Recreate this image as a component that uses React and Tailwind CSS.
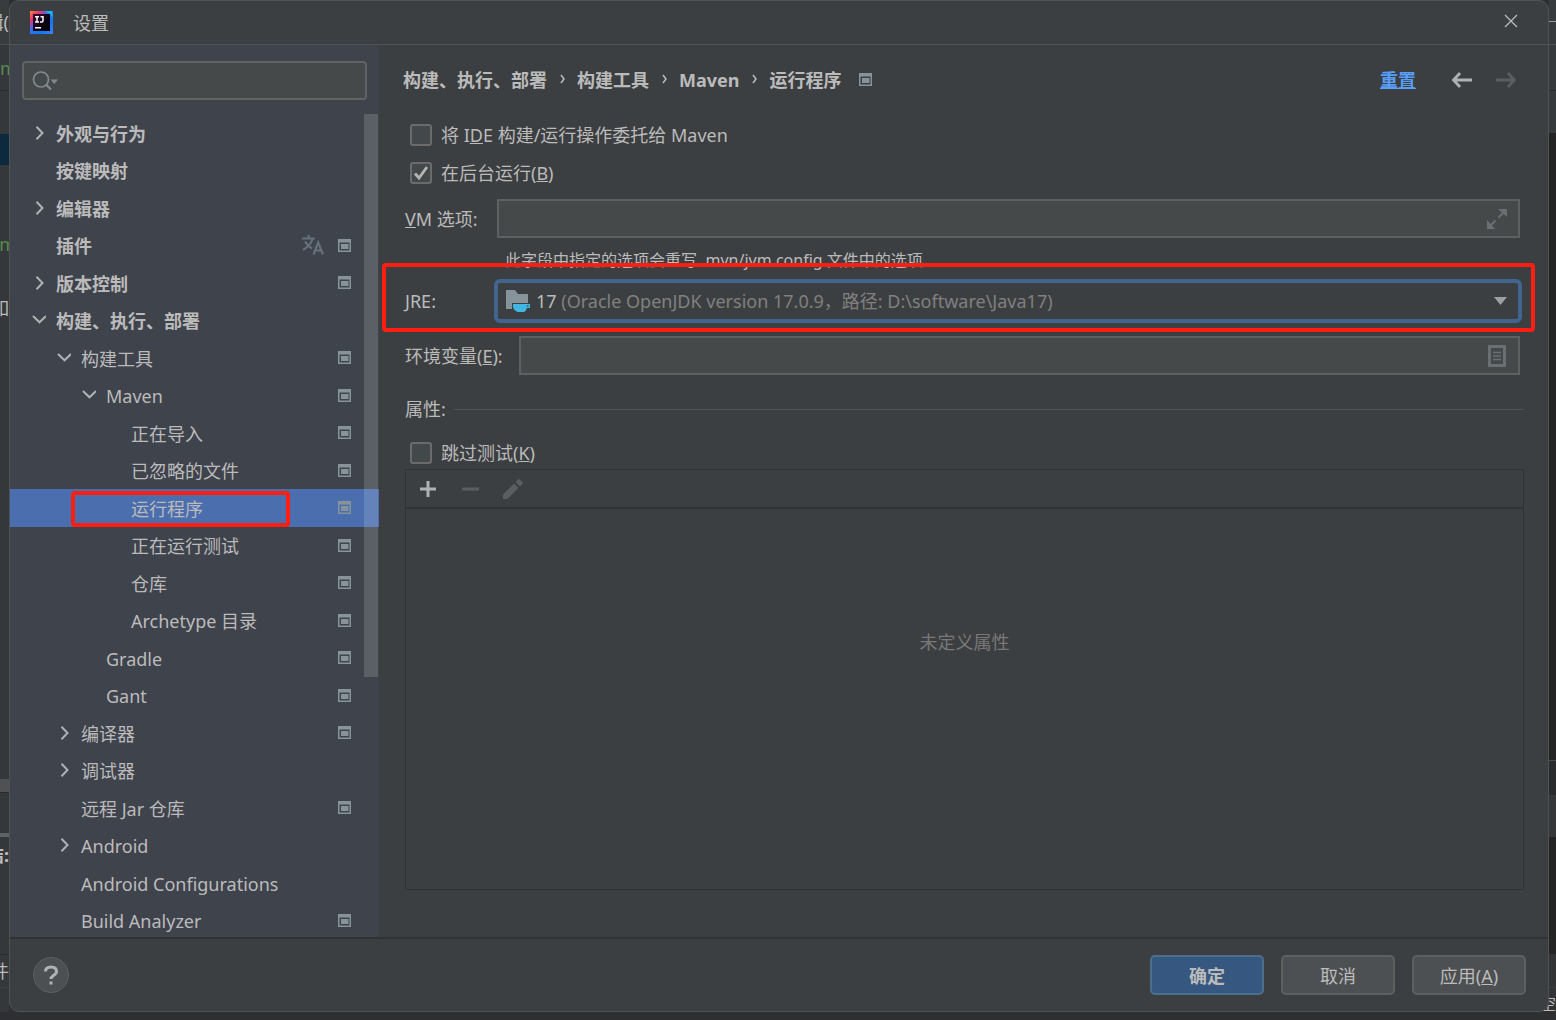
import clsx from 'clsx';

const FONT = 'font-["Noto_Sans","Noto_Sans_CJK_SC",sans-serif]';

const TREE = [
  { label: '外观与行为', level: 0, arrow: 'right' },
  { label: '按键映射', level: 0 },
  { label: '编辑器', level: 0, arrow: 'right' },
  { label: '插件', level: 0, project: true, translate: true },
  { label: '版本控制', level: 0, arrow: 'right', project: true },
  { label: '构建、执行、部署', level: 0, arrow: 'down' },
  { label: '构建工具', level: 1, arrow: 'down', project: true },
  { label: 'Maven', level: 2, arrow: 'down', project: true },
  { label: '正在导入', level: 3, project: true },
  { label: '已忽略的文件', level: 3, project: true },
  { label: '运行程序', level: 3, project: true, selected: true },
  { label: '正在运行测试', level: 3, project: true },
  { label: '仓库', level: 3, project: true },
  { label: 'Archetype 目录', level: 3, project: true },
  { label: 'Gradle', level: 2, project: true },
  { label: 'Gant', level: 2, project: true },
  { label: '编译器', level: 1, arrow: 'right', project: true },
  { label: '调试器', level: 1, arrow: 'right' },
  { label: '远程 Jar 仓库', level: 1, project: true },
  { label: 'Android', level: 1, arrow: 'right' },
  { label: 'Android Configurations', level: 1 },
  { label: 'Build Analyzer', level: 1, project: true },
];

const INDENT = ['pl-[20px]', 'pl-[45px]', 'pl-[70px]', 'pl-[95px]'];

function IdeaLogo() {
  return (
    <svg width="23" height="23" viewBox="0 0 23 23" aria-hidden="true">
      <defs>
        <linearGradient id="idea" x1="0" y1="0" x2="1" y2="1">
          <stop offset="0" stopColor="#fc8a3c" />
          <stop offset="0.22" stopColor="#f0306f" />
          <stop offset="0.42" stopColor="#3f6cf0" />
          <stop offset="0.7" stopColor="#087cfa" />
          <stop offset="1" stopColor="#4a7df5" />
        </linearGradient>
        <linearGradient id="ideaInner" x1="0" y1="0" x2="1" y2="1">
          <stop offset="0" stopColor="#3b0a34" />
          <stop offset="0.6" stopColor="#0a0410" />
          <stop offset="1" stopColor="#000" />
        </linearGradient>
      </defs>
      <path fill="url(#idea)" d="M0 0h23v23H0z" />
      <path fill="#19b4f5" d="M15 0h7l1 7-3-4z" />
      <path fill="url(#ideaInner)" d="M3 3h17v17H3z" />
      <path
        fill="none"
        stroke="#fff"
        strokeWidth="1.5"
        d="M5 5.7h4M7 5.5v5.5M5 11h4M10.5 5.7H13v4q0 1.3-1.3 1.3H10"
      />
      <path fill="#fff" d="M5 16h6v1.6H5z" />
    </svg>
  );
}

function Chevron({ dir }) {
  return (
    <svg width="14" height="14" viewBox="0 0 14 14" aria-hidden="true">
      <path
        fill="none"
        stroke="#afb1b3"
        strokeWidth="2"
        d={dir === 'down' ? 'M1 3 7.500 9.300 14 3' : 'M4.500 .8 10.500 7l-6 6.200'}
      />
    </svg>
  );
}

function ProjectIcon() {
  return (
    <svg width="13" height="13" viewBox="0 0 13 13" className="shrink-0" aria-hidden="true">
      <path fill="#87939a" fillRule="evenodd" d="M0 0h13v13H0zM1.500 3.500v8h10v-8z" />
      <path fill="#87939a" d="M3 5h7.500v5H3z" />
    </svg>
  );
}

function TreeRow({ item }) {
  return (
    <li
      className={clsx(
        'relative flex items-center pr-[28px]',
        INDENT[item.level],
        item.selected && 'bg-[#4b6eaf]',
      )}
    >
      <span className="flex w-[26px] shrink-0 pl-[2px]">
        {item.arrow && <Chevron dir={item.arrow} />}
      </span>
      <span className={clsx('flex-1 pt-[2px] whitespace-nowrap', item.level === 0 && 'font-bold')}>
        {item.label}
      </span>
      {item.translate && (
        <svg width="22" height="20" viewBox="0 0 22 20" className="mr-[14px]" aria-hidden="true">
          <path
            fill="none"
            stroke="#65707a"
            strokeWidth="2.200"
            d="M0 3.500h13M6.500 0v3.500M10.500 4Q8.500 10.500 1 15M3 6.500q2.500 4.500 7 7M11.500 19.500 16.200 7.500 21 19.500M13 15.500h6.500"
          />
        </svg>
      )}
      {item.project && <ProjectIcon />}
      {item.selected && (
        <span className="absolute top-[2px] left-[61px] h-[36px] w-[219px] rounded-[4px] border-4 border-[#ff1e12]" />
      )}
    </li>
  );
}

function Sidebar() {
  return (
    <aside className="flex w-[369px] shrink-0 flex-col bg-[#3f434c]">
      <label className="mx-3 mt-4 flex h-[39px] shrink-0 items-center rounded-[4px] border-2 border-[#616365] bg-[#45494a] pl-2">
        <svg width="28" height="22" viewBox="0 0 28 22" aria-hidden="true">
          <circle cx="9" cy="9.500" r="7.500" fill="none" stroke="#7f8b91" strokeWidth="1.700" />
          <path stroke="#7f8b91" strokeWidth="2.200" d="m14 14.500 5 5" />
          <path fill="#7f8b91" d="M18.500 9.500h7.500l-3.800 4.500z" />
        </svg>
        <input aria-label="搜索" className="min-w-0 flex-1 bg-transparent outline-none" />
      </label>
      <div className="relative mt-[14px] min-h-0 flex-1 overflow-hidden">
        <ul className="grid h-[825px] auto-rows-fr">
          {TREE.map((item) => (
            <TreeRow key={item.label} item={item} />
          ))}
        </ul>
        <div className="absolute top-0 right-[1px] h-[563px] w-[14px] bg-white/15" />
      </div>
    </aside>
  );
}

function Check({ id, checked, children }) {
  return (
    <div className="flex h-[38px] shrink-0 items-center gap-[9px] pl-[5px]">
      <span className="relative flex">
        <input
          id={id}
          type="checkbox"
          defaultChecked={checked}
          className="peer size-[22px] appearance-none rounded-[3px] border-2 border-[#6b6b6b] bg-[#43494a]"
        />
        <svg
          viewBox="0 0 22 22"
          className="pointer-events-none absolute inset-0 hidden size-[22px] peer-checked:block"
          aria-hidden="true"
        >
          <path fill="none" stroke="#b5b5b5" strokeWidth="2.800" d="m5 11.500 4 4.500 8-11" />
        </svg>
      </span>
      <label htmlFor={id}>{children}</label>
    </div>
  );
}

function Crumbs() {
  return (
    <nav className="flex items-center font-bold">
      {['构建、执行、部署', '构建工具', 'Maven', '运行程序'].map((name, i) => (
        <span key={name} className="flex items-center">
          {i > 0 && (
            <svg width="30" height="12" viewBox="0 0 30 12" aria-hidden="true">
              <path fill="none" stroke="#bbb" strokeWidth="1.500" d="m14 1 3 4-3 4" />
            </svg>
          )}
          {name}
        </span>
      ))}
      <span className="ml-[18px]">
        <ProjectIcon />
      </span>
    </nav>
  );
}

function Content() {
  return (
    <main className="flex min-w-0 flex-1 flex-col pr-6 pl-[26px]">
      <div className="mb-[2px] -ml-[2px] flex h-[69px] shrink-0 items-center">
        <Crumbs />
        <a href="#" className="ml-auto font-bold text-[#589df6] underline">
          重置
        </a>
        <button aria-label="后退" className="ml-[35px]">
          <svg width="22" height="18" viewBox="0 0 22 18" aria-hidden="true">
            <path fill="none" stroke="#afb1b3" strokeWidth="2.800" d="M21 9H3M9 2 2.500 9 9 16" />
          </svg>
        </button>
        <button aria-label="前进" disabled className="mr-[7px] ml-[22px]">
          <svg width="22" height="18" viewBox="0 0 22 18" aria-hidden="true">
            <path fill="none" stroke="#5b5d5f" strokeWidth="2.800" d="M1 9h18M13 2l6.500 7-6.500 7" />
          </svg>
        </button>
      </div>

      <Check id="delegate">
        将 I<u>D</u>E 构建/运行操作委托给 Maven
      </Check>
      <Check id="background" checked>
        在后台运行(<u>B</u>)
      </Check>

      <div className="mt-[7px] flex items-center pr-1">
        <label htmlFor="vm" className="w-[92px] shrink-0">
          <u>V</u>M 选项:
        </label>
        <div className="flex h-[39px] flex-1 items-center border-2 border-[#5e6162] bg-[#45494a] pr-[11px]">
          <input id="vm" className="min-w-0 flex-1 bg-transparent outline-none" />
          <svg width="20" height="20" viewBox="0 0 20 20" aria-hidden="true">
            <path fill="#687073" d="M11 0h9v8zM0 11v9h8z" />
            <path stroke="#687073" strokeWidth="2" d="m11.500 8.500 5-5M8.500 11.500l-5 5" />
          </svg>
        </div>
      </div>
      <p className="ml-[100px] h-[25px] pt-[10px] text-[16px] leading-6 whitespace-nowrap">
        此字段中指定的选项会重写 .mvn/jvm.config 文件中的选项
      </p>

      <div className="relative -mr-[11px] -ml-[23px] flex h-[69px] shrink-0 items-center rounded-[4px] border-4 border-[#ff1e12] pt-[7px] pr-[9px] pl-[19px]">
        <label htmlFor="jre" className="w-[89px] shrink-0">
          <u>J</u>RE:
        </label>
        <div className="relative flex h-[44px] flex-1 items-center rounded-[6px] border-4 border-[#41658f] bg-[#3c3f41] pl-2">
          <svg width="26" height="24" viewBox="0 0 26 24" aria-hidden="true">
            <path fill="#87939a" d="M0 1h9l3 4h10v9H6v6H0z" />
            <path
              fill="#40b6e0"
              fillRule="evenodd"
              d="M7 15h17v4h-3q-1 3-3 4h-6Q8 22 7 18zM21 16.500v1.300h1.600v-1.300z"
            />
          </svg>
          <span className="pl-[4px] whitespace-pre">
            17 <span className="text-[#808080]">(Oracle OpenJDK version 17.0.9，路径: D:\software\Java17)</span>
          </span>
          <svg width="13" height="8" viewBox="0 0 13 8" className="mr-[11px] ml-auto" aria-hidden="true">
            <path fill="#9da0a2" d="M0 0h13L6.500 8z" />
          </svg>
          <select id="jre" className="absolute inset-0 opacity-0">
            <option>17</option>
          </select>
        </div>
      </div>

      <div className="mt-[4px] flex items-center pr-1">
        <label htmlFor="env" className="w-[114px] shrink-0">
          环境变量(<u>E</u>):
        </label>
        <div className="flex h-[39px] flex-1 items-center border-2 border-[#5e6162] bg-[#45494a] pr-[12px]">
          <input id="env" className="min-w-0 flex-1 bg-transparent outline-none" />
          <svg width="18" height="22" viewBox="0 0 18 22" aria-hidden="true">
            <path fill="none" stroke="#687073" strokeWidth="3" d="M1.500 1.500h15v19h-15z" />
            <path stroke="#687073" strokeWidth="1.500" d="M5 7.500h8M5 11h8M5 14.500h8" />
          </svg>
        </div>
      </div>

      <div className="mt-[19px] flex h-[30px] items-center gap-2">
        <span>属性:</span>
        <span className="h-px flex-1 bg-[#515456]" />
      </div>
      <div className="mt-[10px]">
        <Check id="skip">
          跳过测试(<u>K</u>)
        </Check>
      </div>

      <div className="-mt-[3px] mb-[47px] flex min-h-0 flex-1 flex-col border border-[#323232]">
        <div className="flex h-[39px] items-center gap-[22px] border-b-2 border-[#323232] pl-[12px]">
          <button aria-label="添加">
            <svg width="20" height="20" viewBox="0 0 20 20" aria-hidden="true">
              <path stroke="#afb1b3" strokeWidth="3" d="M2 10h16M10 2v16" />
            </svg>
          </button>
          <button aria-label="移除" disabled>
            <svg width="20" height="20" viewBox="0 0 20 20" aria-hidden="true">
              <path stroke="#5b5d5f" strokeWidth="3" d="M2 10h17" />
            </svg>
          </button>
          <button aria-label="编辑" disabled>
            <svg width="22" height="22" viewBox="0 0 22 22" aria-hidden="true">
              <path fill="#5b5d5f" d="M1 16.500 12 5.500l4.500 4.500-11 11H1zM13.500 4 17 .8l4.300 4.300L18 8.500z" />
            </svg>
          </button>
        </div>
        <p className="flex h-[265px] items-center justify-center text-[#787878]">未定义属性</p>
      </div>
    </main>
  );
}

function Footer() {
  return (
    <footer className="flex h-[74px] shrink-0 items-center gap-[17px] border-t-2 border-[#323232] pr-[22px] pl-[23px]">
      <button
        aria-label="帮助"
        className="mr-auto flex size-9 items-center justify-center rounded-full border border-[#5e6060] bg-[#4c5052]"
      >
        <svg width="16" height="20" viewBox="0 0 16 20" aria-hidden="true">
          <path fill="none" stroke="#afb1b3" strokeWidth="3" d="M2.500 6.500Q2.500 2 8 2t5.500 4.500Q13.500 8.500 10.500 10.500 8 12.200 8 14" />
          <path fill="#afb1b3" d="M6.500 16.500h3v3h-3z" />
        </svg>
      </button>
      <button className="h-10 w-[114px] rounded-[5px] border-2 border-[#4c708c] bg-[#365880] pt-[2px] font-bold">确定</button>
      <button className="h-10 w-[114px] rounded-[5px] border-2 border-[#5e6060] bg-[#4c5052] pt-[2px]">取消</button>
      <button className="h-10 w-[114px] rounded-[5px] border-2 border-[#5e6060] bg-[#4c5052] pt-[2px]">
        应用(<u>A</u>)
      </button>
    </footer>
  );
}

// Slivers of the editor window that stay visible around the dialog
function EditorLeft() {
  return (
    <div className="flex w-[9px] shrink-0 flex-col overflow-hidden bg-[#35383a] whitespace-nowrap *:shrink-0">
      <div className="flex h-[45px] items-center justify-end border-b border-[#4a4c4e] bg-[#393c3e]">辑(</div>
      <div className="flex h-[46px] items-center border-b border-[#2b2b2b] text-[#5b8a4e]">m</div>
      <div className="mt-[43px] h-[31px] bg-[#0d293e]" />
      <div className="mt-[65px] flex h-[30px] justify-center text-[#5b8a4e]">tm</div>
      <div className="mt-[34px] flex h-[30px] justify-end">如</div>
      <div className="mt-[455px] h-[14px] border-b border-[#2b2b2b] bg-[#4f5152]" />
      <div className="mt-[40px] h-[4px] bg-[#5e6366]" />
      <div className="mt-[4px] flex h-[28px] justify-end font-bold">结:</div>
      <div className="mt-[85px] flex h-[34px] items-center justify-end border-t border-b border-t-[#2b2b2b] border-b-[#404345]">
        件
      </div>
    </div>
  );
}

function EditorRight() {
  return (
    <div className="flex w-[7px] shrink-0 flex-col bg-[#242424] *:shrink-0">
      <div className="h-[45px] border-b border-[#515456] bg-[#383b3d] pt-[21px]">
        <div className="h-px bg-[#9a9a9a]" />
      </div>
      <div className="h-[46px] border-b border-[#2b2b2b] bg-[#373a3c]" />
      <div className="h-[42px] bg-[#373a3c]" />
      <div className="mt-auto h-[35px] border-t border-[#4a4c4d] bg-[#2a2b2c]" />
      <div className="h-[42px] bg-[#353739]" />
      <div className="mt-[117px] h-[34px] border-b border-[#3c3e3f] bg-[#313335]" />
      <div className="flex h-[24px] items-end justify-end bg-[#313335] text-[16px] leading-4 whitespace-nowrap">
        空
      </div>
    </div>
  );
}

export default function App() {
  return (
    <div className={clsx(FONT, 'flex h-screen flex-col overflow-hidden bg-[#2d2f30] text-[18px] leading-7 text-[#bbbbbb]')}>
      <div className="flex min-h-0 flex-1">
        <EditorLeft />
        <div className="relative z-10 flex min-w-0 flex-1 flex-col overflow-hidden rounded-[10px] border border-[#505355] bg-[#3c3f41]">
          <header className="flex h-[44px] shrink-0 items-center border-b border-[#505355] pr-[30px] pl-[20px]">
            <IdeaLogo />
            <h1 className="ml-[20px]">设置</h1>
            <button aria-label="关闭" className="mb-[3px] ml-auto">
              <svg width="14" height="14" viewBox="0 0 14 14" aria-hidden="true">
                <path stroke="#bbb" strokeWidth="1.300" d="m1 1 12 12M13 1 1 13" />
              </svg>
            </button>
          </header>
          <div className="flex min-h-0 flex-1">
            <Sidebar />
            <Content />
          </div>
          <Footer />
        </div>
        <EditorRight />
      </div>
      <div className="h-2 shrink-0" />
    </div>
  );
}
